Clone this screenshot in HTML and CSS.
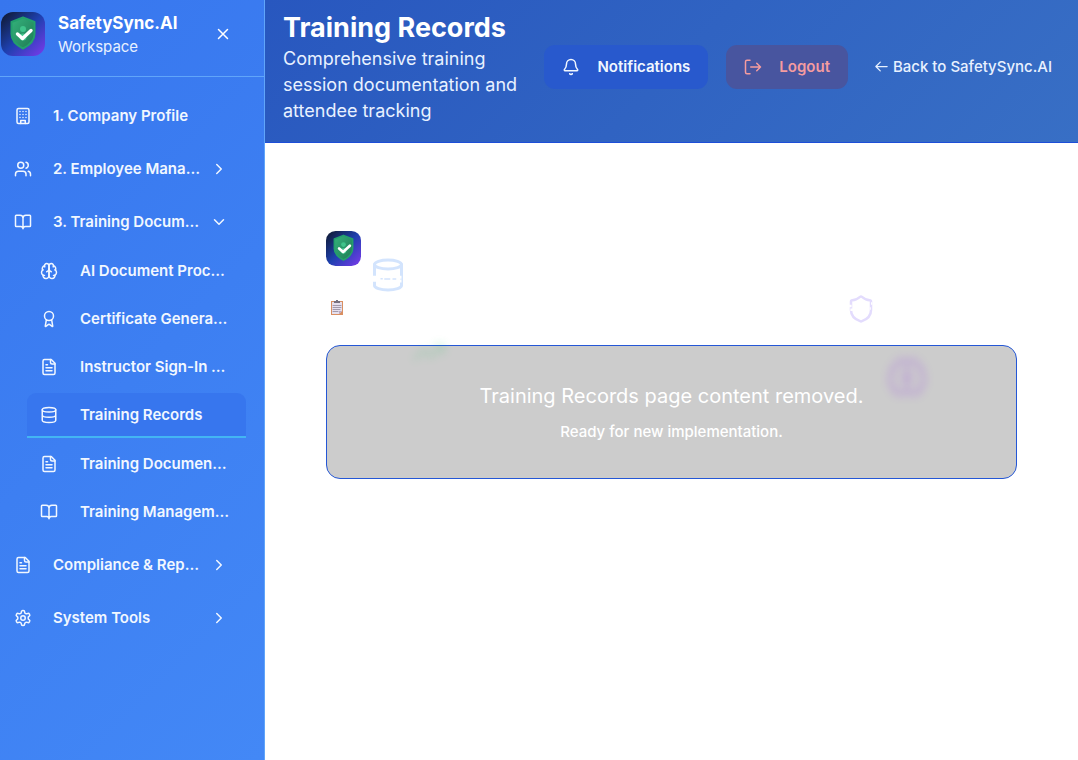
FILE: index.html
```html
<!DOCTYPE html>
<html lang="en">
<head>
<meta charset="utf-8">
<meta name="viewport" content="width=device-width, initial-scale=1">
<title>Training Records</title>
<link rel="stylesheet" href="styles.css">
</head>
<body>
<svg class="defs" aria-hidden="true">
  <defs>
    <linearGradient id="tile" x1="0" y1="0" x2="1" y2="1"><stop offset="0" stop-color="#0f172a"/><stop offset=".5" stop-color="#1e40af"/><stop offset="1" stop-color="#7c3aed"/></linearGradient>
    <linearGradient id="shield" x1="0" y1="0" x2="1" y2="1"><stop offset="0" stop-color="#34b27b"/><stop offset="1" stop-color="#1f7a55"/></linearGradient>
    <symbol id="logo" viewBox="0 0 44 44"><rect width="44" height="44" rx="12" fill="url(#tile)"/><path d="M22 5.500 33.500 10v12c0 6.500-4.500 11-11.500 14.500C15 33 10.500 28.500 10.500 22V10z" fill="url(#shield)" stroke="#23a06c"/><circle cx="22" cy="17" r="3" fill="#3fc48b"/><circle cx="22" cy="25" r="3.500" fill="#3fc48b"/><path d="m16.500 22 5 4.500 8.500-8" fill="none" stroke="#fff" stroke-width="3.400"/></symbol>
    <symbol id="building" viewBox="0 0 24 24"><rect x="4" y="2" width="16" height="20" rx="2"/><path d="M9 22v-4h6v4M8 6h.01M16 6h.01M12 6h.01M12 10h.01M12 14h.01M16 10h.01M16 14h.01M8 10h.01M8 14h.01"/></symbol>
    <symbol id="users" viewBox="0 0 24 24"><path d="M16 21v-2a4 4 0 0 0-4-4H6a4 4 0 0 0-4 4v2"/><circle cx="9" cy="7" r="4"/><path d="M22 21v-2a4 4 0 0 0-3-3.870M16 3.130a4 4 0 0 1 0 7.750"/></symbol>
    <symbol id="book" viewBox="0 0 24 24"><path d="M12 7v14M3 18a1 1 0 0 1-1-1V4a1 1 0 0 1 1-1h5a4 4 0 0 1 4 4 4 4 0 0 1 4-4h5a1 1 0 0 1 1 1v13a1 1 0 0 1-1 1h-6a3 3 0 0 0-3 3 3 3 0 0 0-3-3z"/></symbol>
    <symbol id="brain" viewBox="0 0 24 24"><path d="M12 5a3 3 0 1 0-5.997.125 4 4 0 0 0-2.526 5.770 4 4 0 0 0 .556 6.588A4 4 0 1 0 12 18Z"/><path d="M12 5a3 3 0 1 1 5.997.125 4 4 0 0 1 2.526 5.770 4 4 0 0 1-.556 6.588A4 4 0 1 1 12 18Z"/><path d="M15 13a4.500 4.500 0 0 1-3-4 4.500 4.500 0 0 1-3 4M17.599 6.500a3 3 0 0 0 .399-1.375M6.003 5.125A3 3 0 0 0 6.401 6.500M3.477 10.896a4 4 0 0 1 .585-.396M19.938 10.500a4 4 0 0 1 .585.396M6 18a4 4 0 0 1-1.967-.516M19.967 17.484A4 4 0 0 1 18 18"/></symbol>
    <symbol id="award" viewBox="0 0 24 24"><path d="m15.477 12.890 1.515 8.526a.5.5 0 0 1-.810.470l-3.580-2.687a1 1 0 0 0-1.197 0l-3.586 2.686a.5.5 0 0 1-.810-.469l1.514-8.526"/><circle cx="12" cy="8" r="6"/></symbol>
    <symbol id="file" viewBox="0 0 24 24"><path d="M15 2H6a2 2 0 0 0-2 2v16a2 2 0 0 0 2 2h12a2 2 0 0 0 2-2V7Z"/><path d="M14 2v4a2 2 0 0 0 2 2h4M10 9H8M16 13H8M16 17H8"/></symbol>
    <symbol id="database" viewBox="0 0 24 24"><ellipse cx="12" cy="5" rx="9" ry="3"/><path d="M3 5v14a9 3 0 0 0 18 0V5M3 12a9 3 0 0 0 18 0"/></symbol>
    <symbol id="gear" viewBox="0 0 24 24"><path d="M12.220 2h-.440a2 2 0 0 0-2 2v.180a2 2 0 0 1-1 1.730l-.430.250a2 2 0 0 1-2 0l-.150-.080a2 2 0 0 0-2.730.730l-.220.380a2 2 0 0 0 .730 2.730l.150.100a2 2 0 0 1 1 1.720v.510a2 2 0 0 1-1 1.740l-.150.090a2 2 0 0 0-.730 2.730l.220.380a2 2 0 0 0 2.730.730l.150-.080a2 2 0 0 1 2 0l.430.250a2 2 0 0 1 1 1.730V20a2 2 0 0 0 2 2h.440a2 2 0 0 0 2-2v-.180a2 2 0 0 1 1-1.730l.430-.250a2 2 0 0 1 2 0l.150.080a2 2 0 0 0 2.730-.730l.220-.390a2 2 0 0 0-.730-2.730l-.150-.080a2 2 0 0 1-1-1.740v-.500a2 2 0 0 1 1-1.740l.150-.090a2 2 0 0 0 .730-2.730l-.220-.380a2 2 0 0 0-2.730-.730l-.150.080a2 2 0 0 1-2 0l-.430-.250a2 2 0 0 1-1-1.730V4a2 2 0 0 0-2-2z"/><circle cx="12" cy="12" r="3"/></symbol>
    <symbol id="right" viewBox="0 0 24 24"><path d="m9 18 6-6-6-6"/></symbol>
    <symbol id="down" viewBox="0 0 24 24"><path d="m6 9 6 6 6-6"/></symbol>
    <symbol id="close" viewBox="0 0 24 24"><path d="M18 6 6 18M6 6l12 12"/></symbol>
    <symbol id="bell" viewBox="0 0 24 24"><path d="M10.268 21a2 2 0 0 0 3.464 0M3.262 15.326A1 1 0 0 0 4 17h16a1 1 0 0 0 .740-1.673C19.410 13.956 18 12.499 18 8A6 6 0 0 0 6 8c0 4.499-1.411 5.956-2.738 7.326"/></symbol>
    <symbol id="logout" viewBox="0 0 24 24"><path d="M8 21H4a2 2 0 0 1-2-2V5a2 2 0 0 1 2-2h4M17 17l5-5-5-5M22 12H9"/></symbol>
    <symbol id="back" viewBox="0 0 24 24"><path d="m10 5-7 7 7 7M3 12h18"/></symbol>
    <symbol id="broken-database" viewBox="0 0 24 24"><ellipse cx="12" cy="5" rx="9" ry="3"/><path d="M3 5v14a9 3 0 0 0 18 0V5"/><path stroke-width="1" stroke-linecap="butt" d="M7 14.500h1.500M9.500 14.700h4M15 14.600h2.500"/><path class="cut" d="M1.500 13.500h3M1.500 15.500h2.500M19.500 13.500h1.500M19.800 16h1.200"/></symbol>
    <symbol id="broken-shield" viewBox="0 0 24 24"><path d="M20 13c0 5-3.500 7.500-7.660 8.950a1 1 0 0 1-.670-.010C7.500 20.500 4 18 4 13V6a1 1 0 0 1 1-1c2 0 4.500-1.200 6.240-2.720a1.170 1.170 0 0 1 1.520 0C14.510 3.810 17 5 19 5a1 1 0 0 1 1 1z"/><path class="cut" d="M2.500 9.500h2M3.500 12.500h2M20 7.500h1M19 11.500h.8"/></symbol>
    <symbol id="trend" viewBox="0 0 24 24"><path d="M16 7h6v6M22 7l-8.500 8.500-5-5L2 17"/></symbol>
  </defs>
</svg>
<div class="app">
  <aside class="sidebar">
    <div class="brand">
      <svg class="logo"><use href="#logo"/></svg>
      <div class="brand-text"><strong class="brand-name">SafetySync.AI</strong><span>Workspace</span></div>
      <button class="close" type="button" aria-label="Close menu"><svg class="icon"><use href="#close"/></svg></button>
    </div>
    <nav class="nav">
      <a class="item" href="#"><svg class="icon"><use href="#building"/></svg><span class="label">1. Company Profile</span></a>
      <button class="item" type="button"><svg class="icon"><use href="#users"/></svg><span class="label">2. Employee Management</span><svg class="icon"><use href="#right"/></svg></button>
      <div class="group">
        <button class="item" type="button" aria-expanded="true"><svg class="icon"><use href="#book"/></svg><span class="label">3. Training Documentation</span><svg class="icon"><use href="#down"/></svg></button>
        <div class="subnav">
          <a class="item" href="#"><svg class="icon"><use href="#brain"/></svg><span class="label">AI Document Processor</span></a>
          <a class="item" href="#"><svg class="icon"><use href="#award"/></svg><span class="label">Certificate Generator</span></a>
          <a class="item" href="#"><svg class="icon"><use href="#file"/></svg><span class="label">Instructor Sign-In Sheets</span></a>
          <a class="item active" href="#" aria-current="page"><svg class="icon"><use href="#database"/></svg><span class="label">Training Records</span></a>
          <a class="item" href="#"><svg class="icon"><use href="#file"/></svg><span class="label">Training Documentation</span></a>
          <a class="item" href="#"><svg class="icon"><use href="#book"/></svg><span class="label">Training Management</span></a>
        </div>
      </div>
      <button class="item" type="button"><svg class="icon"><use href="#file"/></svg><span class="label">Compliance &amp; Reporting</span><svg class="icon"><use href="#right"/></svg></button>
      <button class="item" type="button"><svg class="icon"><use href="#gear"/></svg><span class="label">System Tools</span><svg class="icon"><use href="#right"/></svg></button>
    </nav>
  </aside>
  <div class="page">
    <header class="topbar">
      <div class="heading"><h1>Training Records</h1><p>Comprehensive training session documentation and attendee tracking</p></div>
      <div class="actions">
        <button class="btn" type="button"><svg class="icon"><use href="#bell"/></svg>Notifications</button>
        <button class="btn logout" type="button"><svg class="icon"><use href="#logout"/></svg>Logout</button>
        <a class="back" href="#"><svg class="arrow"><use href="#back"/></svg>Back to SafetySync.AI</a>
      </div>
    </header>
    <main class="content">
      <svg class="float float-database"><use href="#broken-database"/></svg>
      <svg class="float float-shield"><use href="#broken-shield"/></svg>
      <svg class="float float-trend"><use href="#trend"/></svg>
      <svg class="float float-brain"><use href="#brain"/></svg>
      <svg class="hero-logo"><use href="#logo"/></svg>
      <svg class="clipboard" viewBox="0 0 12 15" role="img" aria-label="Clipboard"><path fill="#d98f62" d="M0 1h12v14H0z"/><path fill="#e6e0ee" d="M1 2h10v9l-3 3H1z"/><path fill="#b9a9c4" d="M8 11h3l-3 3z"/><path fill="#77717f" d="M3 1h2V0h2v1h2v2H3z"/><path stroke="#a39bad" d="M2 5.500h8M2 7.500h8M2 9.500h7M2 11.500h5"/></svg>
      <section class="notice"><h2>Training Records page content removed.</h2><p>Ready for new implementation.</p></section>
    </main>
  </div>
</div>
</body>
</html>
```
FILE: styles.css
```css
* { box-sizing: border-box; }
body { margin: 0; font-family: Inter, sans-serif; font-size: 16px; color: #fff; background: #fff; }
h1, h2, p { margin: 0; }
button { font: inherit; color: inherit; background: none; border: 0; padding: 0; text-align: left; cursor: pointer; }
a { color: inherit; text-decoration: none; }
svg { fill: none; stroke: currentColor; stroke-width: 2; stroke-linecap: round; stroke-linejoin: round; flex: none; }
.defs { position: absolute; width: 0; height: 0; }
.cut { stroke: #fff; stroke-linecap: butt; }
.icon { width: 18px; height: 18px; }
.app { display: flex; min-height: 100vh; }

.sidebar { flex: 0 0 265px; min-width: 0; background: linear-gradient(135deg, #3776ee, #4388f6); border-right: 1px solid #60a5fa; }
.brand { display: flex; align-items: center; height: 77px; padding: 0 32px 9px 1px; border-bottom: 1px solid #60a5fa; }
.logo { width: 44px; height: 44px; stroke: none; }
.brand-text { display: flex; flex-direction: column; flex: 1; margin-left: 13px; font-size: 15px; line-height: 22px; color: #e8f1ff; }
.brand-name { font-size: 17px; line-height: 26px; color: #fff; }
.nav { display: flex; flex-direction: column; gap: 9px; padding: 17px 36px 0 5px; }
.item { display: flex; align-items: center; width: 100%; height: 44px; padding: 0 0 0 9px; font-size: 15px; font-weight: 600; line-height: 22px; color: #f1f7ff; }
.label { flex: 1; min-width: 0; margin-left: 21px; margin-right: 10px; overflow: hidden; text-overflow: ellipsis; white-space: nowrap; }
.subnav { display: flex; flex-direction: column; gap: 4px; padding: 5px 0 0 22px; margin-right: -18px; }
.subnav .item { padding-left: 13px; }
.subnav .label { margin-left: 22px; margin-right: 16px; }
.subnav .active { height: 45px; background: #3776ee; border-bottom: 2px solid #43b5f3; border-radius: 9px 9px 0 0; }
.close { display: flex; padding: 0; }

.page { flex: 1; min-width: 0; }
.topbar { display: flex; align-items: center; min-height: 143px; padding: 8px 26px 17px 18px; background: linear-gradient(135deg, #2857bf, #386fc5); border-bottom: 1px solid #1d4ed8; }
.heading { flex: 1; min-width: 0; }
.heading h1 { font-size: 27px; line-height: 36px; font-weight: 700; }
.heading p { font-size: 18px; line-height: 26px; color: #e8f1ff; }
.actions { display: flex; align-items: center; gap: 18px; margin-left: 18px; }
.btn { display: flex; align-items: center; gap: 17px; height: 44px; padding: 0 18px; font-size: 15px; font-weight: 600; color: #f1f7ff; background: #2859cd; border-radius: 11px; }
.logout { color: #f59c9f; background: #48559f; }
.back { display: flex; align-items: center; gap: 4px; margin-left: 8px; font-size: 15px; font-weight: 500; color: #e8f1ff; white-space: nowrap; }
.arrow { width: 15px; height: 15px; }

.content { position: relative; padding: 88px 61px 40px; }
.hero-logo { display: block; width: 35px; height: 35px; stroke: none; }
.clipboard { display: block; width: 12px; height: 15px; margin: 34px 0 30px 5px; stroke-width: 1; stroke: none; }
.notice { display: flex; flex-direction: column; align-items: center; gap: 9px; padding: 35px 24px; text-align: center; background: #ccc; border: 1px solid #2457d6; border-radius: 14px; }
.notice h2 { font-size: 20px; line-height: 30px; font-weight: 400; }
.notice p { font-size: 15px; line-height: 23px; font-weight: 500; }
.float { position: absolute; }
.float-database { left: 105px; top: 114px; width: 36px; height: 36px; color: #d3e4fd; }
.float-shield { left: 581px; top: 151px; width: 30px; height: 30px; color: #e3dcfd; }
.float-trend { left: 147px; top: 192px; width: 34px; height: 34px; color: #22c55e; opacity: .2; filter: blur(4px); }
.float-brain { left: 621px; top: 213px; width: 42px; height: 42px; color: #9333ea; opacity: .25; filter: blur(4px); }
```
